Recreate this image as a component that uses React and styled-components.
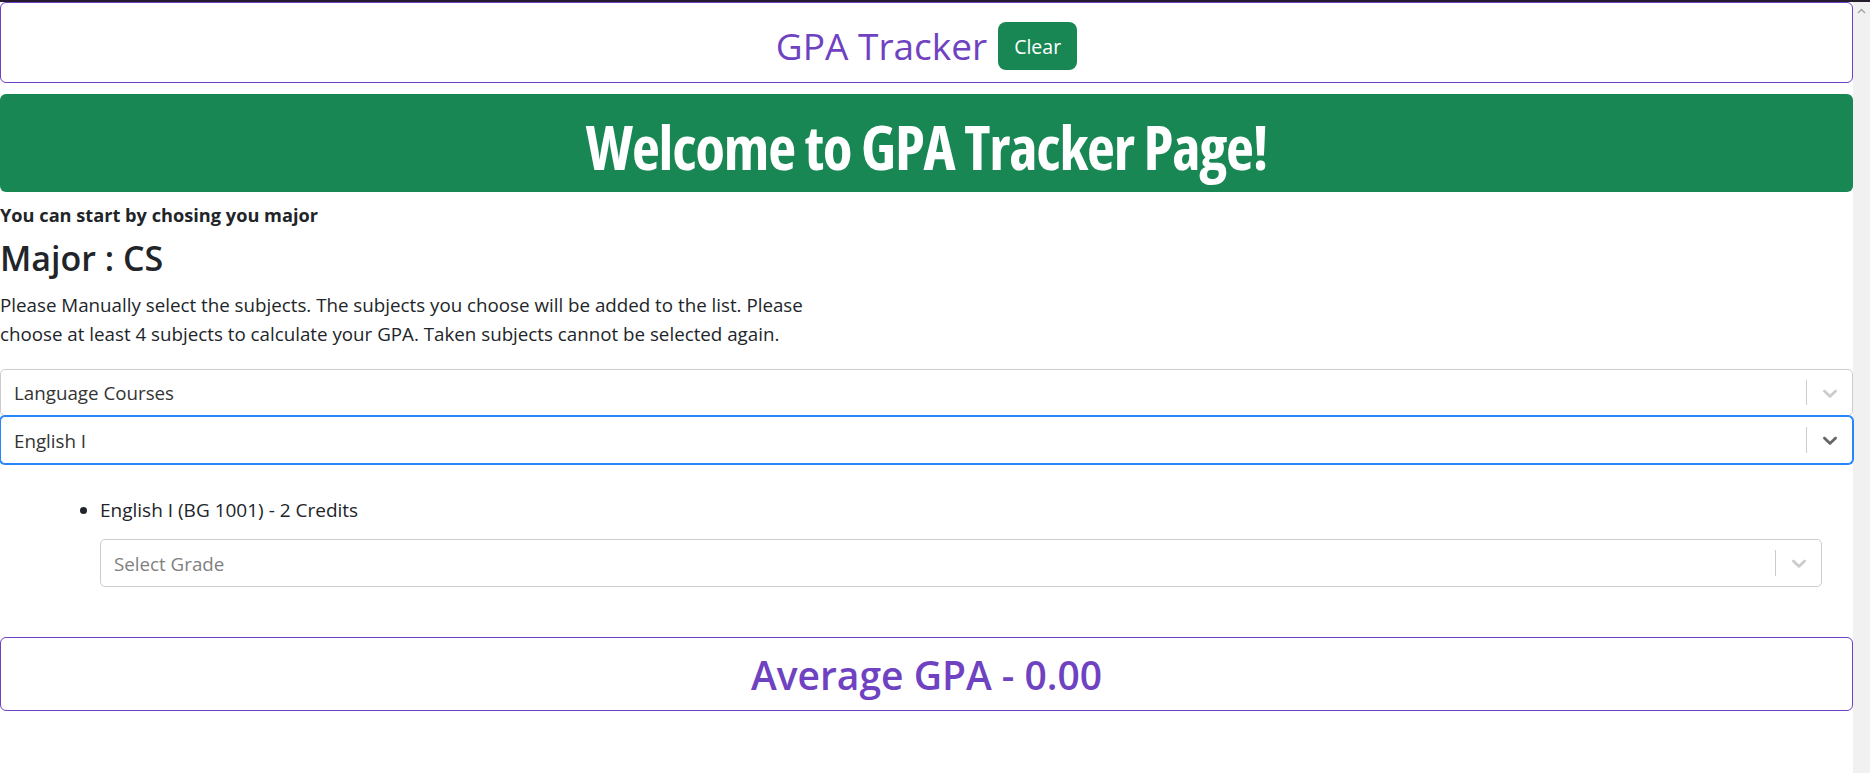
import React from 'react'
import styled, { createGlobalStyle } from 'styled-components'

const GlobalStyle = createGlobalStyle`
    html, body {
        margin: 0;
        padding: 0;
        background: #ffffff;
        overflow: hidden;
    }
    body {
        font-family: 'Open Sans', 'Noto Sans', sans-serif;
        color: #212529;
    }
    * {
        box-sizing: border-box;
    }
`

const purple = '#6f42c1'
const green = '#198754'

const Frame = styled.div`
    display: flex;
    height: 100vh;
    border-top: 2px solid #241c2c;
`

const Page = styled.main`
    flex: 1;
    min-width: 0;
    display: flex;
    flex-direction: column;
`

const Scrollbar = styled.div`
    width: 17px;
    background: #f1f1f1;
    display: flex;
    justify-content: center;
    padding-top: 6px;
`

const Header = styled.header`
    border: 1px solid ${purple};
    border-radius: 6px;
    padding: 19px 0 12px;
    display: flex;
    justify-content: center;
    align-items: center;
    gap: 11px;
`

const Title = styled.h1`
    margin: 0;
    font-size: 37px;
    font-weight: 400;
    line-height: 48px;
    color: ${purple};
`

const ClearButton = styled.button`
    height: 48px;
    padding: 0 16px;
    border: none;
    border-radius: 8px;
    background: ${green};
    color: #ffffff;
    font-family: inherit;
    font-size: 19.5px;
`

const Banner = styled.div`
    margin-top: 11px;
    height: 98px;
    padding-top: 8px;
    border-radius: 6px;
    background: ${green};
    display: flex;
    justify-content: center;
    align-items: center;
`

const BannerTitle = styled.h1`
    margin: 0;
    font-family: 'Open Sans', 'Roboto', sans-serif;
    font-stretch: condensed;
    font-size: 61px;
    font-weight: 700;
    letter-spacing: -1.2px;
    line-height: 1.2;
    color: #ffffff;
`

const Intro = styled.div`
    margin-top: 9px;
    font-size: 18.2px;
    font-weight: 700;
    line-height: 29px;
`

const Major = styled.h2`
    margin: 9px 0 0;
    font-size: 34px;
    font-weight: 600;
    line-height: 38px;
`

const Lead = styled.p`
    margin: 13px 0 0;
    max-width: 850px;
    font-size: 18.75px;
    line-height: 29px;
`

const Control = styled.div`
    display: flex;
    align-items: stretch;
    height: ${p => p.$tall ? 48 : 47}px;
    margin-top: ${p => p.$gap || 0}px;
    border: 1px solid ${p => p.$focused ? '#2684ff' : '#cccccc'};
    box-shadow: ${p => p.$focused ? '0 0 0 1px #2684ff' : 'none'};
    border-radius: 5px;
    background: #ffffff;
    position: relative;
`

const Value = styled.div`
    flex: 1;
    display: flex;
    align-items: center;
    padding: 0 12px 0 13px;
    font-size: 18.75px;
    color: ${p => p.$placeholder ? '#808080' : '#333333'};
`

const Separator = styled.span`
    width: 1px;
    margin: 10px 0;
    background: #cccccc;
`

const Indicator = styled.div`
    width: 45px;
    display: flex;
    align-items: center;
    justify-content: center;
    color: ${p => p.$focused ? '#666666' : '#cccccc'};
`

const SubjectList = styled.ul`
    margin: 32px 0 0;
    padding: 0 31px 0 100px;
    list-style: disc;
`

const Subject = styled.li`
    font-size: 19px;
    line-height: 29px;
`

const AverageBox = styled.div`
    margin-top: 50px;
    height: 74px;
    border: 1px solid ${purple};
    border-radius: 6px;
    display: flex;
    justify-content: center;
    align-items: center;
`

const Average = styled.h2`
    margin: 0;
    font-size: 39px;
    font-weight: 600;
    color: ${purple};
`

const Chevron = () => (
    <svg width="24" height="24" viewBox="0 0 20 20" fill="currentColor">
        <path d="M4.516 7.548c0.436-0.446 1.043-0.481 1.576 0l3.908 3.747 3.908-3.747c0.533-0.481 1.141-0.446 1.574 0 0.436 0.445 0.408 1.197 0 1.615-0.406 0.418-4.695 4.502-4.695 4.502-0.217 0.223-0.502 0.335-0.787 0.335s-0.57-0.112-0.789-0.335c0 0-4.287-4.084-4.695-4.502s-0.436-1.17 0-1.615z" />
    </svg>
)

const Select = ({ value, placeholder, focused, tall, gap }) => (
    <Control $focused={focused} $tall={tall} $gap={gap}>
        <Value $placeholder={!value}>{value || placeholder}</Value>
        <Separator />
        <Indicator $focused={focused}>
            <Chevron />
        </Indicator>
    </Control>
)

export default function App() {
    return (
        <>
            <GlobalStyle />
            <Frame>
                <Page>
                    <Header>
                        <Title>GPA Tracker</Title>
                        <ClearButton>Clear</ClearButton>
                    </Header>
                    <Banner>
                        <BannerTitle>Welcome to GPA Tracker Page!</BannerTitle>
                    </Banner>
                    <Intro>You can start by chosing you major</Intro>
                    <Major>Major : CS</Major>
                    <Lead>
                        Please Manually select the subjects. The subjects you choose will be added to the list. Please
                        choose at least 4 subjects to calculate your GPA. Taken subjects cannot be selected again.
                    </Lead>
                    <Select value="Language Courses" gap={21} />
                    <Select value="English I" focused tall />
                    <SubjectList>
                        <Subject>
                            English I (BG 1001) - 2 Credits
                            <Select placeholder="Select Grade" tall gap={14} />
                        </Subject>
                    </SubjectList>
                    <AverageBox>
                        <Average>Average GPA - 0.00</Average>
                    </AverageBox>
                </Page>
                <Scrollbar>
                    <svg width="9" height="6" viewBox="0 0 9 6">
                        <polyline points="1,5 4.5,1.5 8,5" fill="none" stroke="#a3a3a3" strokeWidth="1.4" />
                    </svg>
                </Scrollbar>
            </Frame>
        </>
    )
}
